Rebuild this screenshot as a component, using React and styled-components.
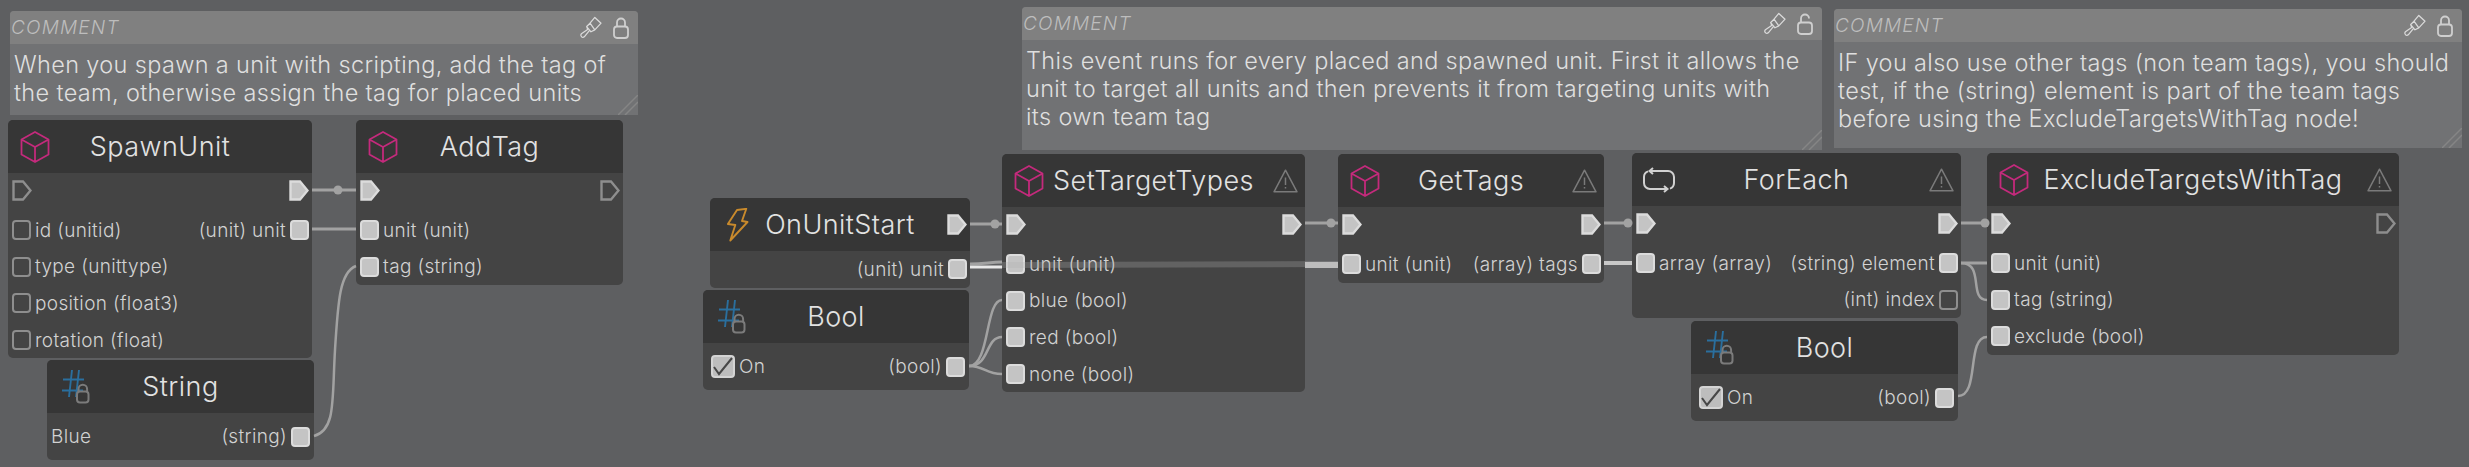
import React from 'react'
import styled, { createGlobalStyle } from 'styled-components'

const Global = createGlobalStyle`
  html, body { margin:0; padding:0; background:#5e5f61; }
  body { font-family:Inter,"Open Sans","Liberation Sans",sans-serif; font-weight:300; }
`
const Canvas = styled.div`
  position:relative;
  width:2469px;
  height:467px;
  overflow:hidden;
  background:#5e5f61;
`
const NodeBox = styled.div`
  position:absolute;
  left:${p => p.$x}px;
  top:${p => p.$y}px;
  width:${p => p.$w}px;
  background:#444444;
  border-radius:5px;
  overflow:hidden;
`
const Head = styled.div`
  display:grid;
  grid-template-columns:minmax(0,1fr) auto minmax(0,1fr);
  align-items:center;
  height:53px;
  background:#363636;
`
const HeadLeft = styled.div`
  display:flex;
  align-items:center;
  padding-left:${p => p.$pad ?? 12}px;
`
const HeadRight = styled.div`
  display:flex;
  align-items:center;
  justify-content:flex-end;
  padding-right:${p => p.$pad}px;
`
const Title = styled.div`
  font-size:27px;
  letter-spacing:0.45px;
  color:#e2e2e2;
  white-space:nowrap;
`
const Body = styled.div`
  padding:0 3px 0 4px;
`
const ExecRow = styled.div`
  display:flex;
  justify-content:space-between;
  align-items:center;
  height:34px;
  margin-bottom:5px;
`
const Row = styled.div`
  display:flex;
  justify-content:space-between;
  align-items:center;
  height:36.6px;
`
const ValueRow = styled.div`
  display:flex;
  justify-content:space-between;
  align-items:center;
  height:47px;
  padding:0 1px 0 ${p => p.$padL ?? 0}px;
`
const Side = styled.div`
  display:flex;
  align-items:center;
  gap:4px;
  margin-left:${p => (p.$right ? 'auto' : 0)};
`
const Label = styled.span`
  font-size:19px;
  letter-spacing:0.35px;
  color:#d2d2d2;
  white-space:nowrap;
`
const Pin = styled.span`
  display:block;
  box-sizing:border-box;
  width:19px;
  height:20px;
  border-radius:4px;
  border:2px solid ${p => (p.$on ? '#dcdcdc' : '#8e8e8e')};
  background:${p => (p.$on ? '#c4c4c4' : 'transparent')};
`
const Check = styled.span`
  display:flex;
  align-items:center;
  justify-content:center;
  box-sizing:border-box;
  width:24px;
  height:23px;
  border-radius:4px;
  border:2px solid #d4d4d4;
  background:#bdbdbd;
`
const CommentBox = styled.div`
  position:absolute;
  left:${p => p.$x}px;
  top:${p => p.$y}px;
  width:${p => p.$w}px;
  height:${p => p.$h}px;
  background:#717274;
  border-radius:4px 4px 0 0;
`
const CommentHead = styled.div`
  display:flex;
  align-items:center;
  justify-content:space-between;
  height:33px;
  padding:0 9px 0 1px;
  background:#808080;
  border-radius:4px 4px 0 0;
`
const CommentTitle = styled.span`
  font-size:19px;
  font-style:italic;
  letter-spacing:1.2px;
  color:#bdbdbd;
`
const CommentTools = styled.div`
  display:flex;
  align-items:center;
  gap:11px;
`
const CommentText = styled.div`
  padding:7px 0 0 4px;
  font-size:23.5px;
  line-height:27.8px;
  letter-spacing:0.35px;
  color:#dfdfdf;
  white-space:pre;
`
const Grip = styled.svg`
  position:absolute;
  right:0;
  bottom:0;
`
const Wires = styled.svg`
  position:absolute;
  left:0;
  top:0;
  pointer-events:none;
`

const ExecPin = ({ on }) => (
  <svg width="20" height="21" viewBox="0 0 20 21">
    <path d="M1.5 1.5H11L18.5 10.5L11 19.5H1.5Z" fill={on ? '#c4c4c4' : 'none'} stroke={on ? '#dcdcdc' : '#8e8e8e'} strokeWidth="2.4" />
  </svg>
)
const CubeIcon = () => (
  <svg width="30" height="32" viewBox="0 0 30 32" fill="none" stroke="#c42a7c" strokeWidth="1.8" strokeLinejoin="round">
    <path d="M15 1L28.5 8.5V23.5L15 31L1.5 23.5V8.5Z M1.5 8.5L15 16L28.5 8.5 M15 16V31" />
  </svg>
)
const HashIcon = () => (
  <svg width="36" height="36" viewBox="0 0 36 36" fill="none">
    <path d="M1 10.5H22 M0 21.5H21 M10 1L7 28 M17 1L14 28" stroke="#2a6f9e" strokeWidth="1.9" />
    <path d="M16.5 22.5V20a4.3 4.3 0 0 1 8.6 0V22.5" stroke="#7b7b7b" strokeWidth="2" />
    <rect x="15" y="22.5" width="11.5" height="11" rx="3" stroke="#7b7b7b" strokeWidth="2" />
  </svg>
)
const BoltIcon = () => (
  <svg width="22" height="34" viewBox="0 0 22 34" fill="none" stroke="#c98a2c" strokeWidth="1.9" strokeLinejoin="round">
    <path d="M10 2L19.3 .8L15 13L20.5 14L3.3 32.5L8.3 17L.9 16Z" />
  </svg>
)
const LoopIcon = () => (
  <svg width="36" height="26" viewBox="0 0 36 26" fill="none" stroke="#d0d0d0" strokeWidth="2">
    <path d="M9 4H27a6 6 0 0 1 6 6v6a6 6 0 0 1-4 5.6 M12 1L8.5 4L12 7 M26 22H9a6 6 0 0 1-6-6v-6a6 6 0 0 1 4-5.6 M23 19L26.5 22L23 25" />
  </svg>
)
const WarnIcon = () => (
  <svg width="25" height="24" viewBox="0 0 25 24" fill="none" stroke="#7a7a7a" strokeWidth="1.5" strokeLinejoin="round">
    <path d="M12.5 1.2L24 22.8H1Z M12.5 8.5V16 M12.5 18V19.6" />
  </svg>
)
const BrushIcon = () => (
  <svg width="23" height="23" viewBox="0 0 24 24" fill="none" stroke="#dadada" strokeWidth="1.3" strokeLinejoin="round">
    <path d="M11.5 7.5L16.5 1.5L23 7.5L16.5 14.5Z M11.5 7.5L8 11L12.5 16.5L16.5 14.5 M8 11L9 14L2.5 18.5a2.2 2.2 0 0 0 3 3.2L11 15" />
  </svg>
)
const LockIcon = ({ open }) => (
  <svg width="16" height="22" viewBox="0 0 16 22" fill="none" stroke="#cfcfcf" strokeWidth="1.8">
    <path d={open ? 'M4 9.5V5.5a4 4 0 0 1 8 0' : 'M4 9.5V5.5a4 4 0 0 1 8 0V9.5'} />
    <rect x="1" y="9.5" width="14" height="11.5" rx="3" />
  </svg>
)
const ICONS = { cube: <CubeIcon />, hash: <HashIcon />, bolt: <BoltIcon />, loop: <LoopIcon /> }

const Comment = ({ x, y, w, h, open, text }) => (
  <CommentBox $x={x} $y={y} $w={w} $h={h}>
    <CommentHead>
      <CommentTitle>COMMENT</CommentTitle>
      <CommentTools><BrushIcon /><LockIcon open={open} /></CommentTools>
    </CommentHead>
    <CommentText>{text}</CommentText>
    <Grip width="20" height="20" viewBox="0 0 20 20" stroke="#858585" strokeWidth="1.5">
      <path d="M0 20L20 0 M7 20L20 7" />
    </Grip>
  </CommentBox>
)

const Node = ({ x, y, w, icon, title, warn, padL, headPin, execIn, execOut, rows, value }) => (
  <NodeBox $x={x} $y={y} $w={w}>
    <Head>
      <HeadLeft $pad={padL}>{ICONS[icon]}</HeadLeft>
      <Title>{title}</Title>
      <HeadRight $pad={headPin ? 3 : 7}>{warn && <WarnIcon />}{headPin && <ExecPin on />}</HeadRight>
    </Head>
    <Body>
      {execIn !== undefined && (
        <ExecRow><ExecPin on={execIn} /><ExecPin on={execOut} /></ExecRow>
      )}
      {rows && rows.map((r, i) => (
        <Row key={i}>
          {r.l && <Side><Pin $on={r.lOn} /><Label>{r.l}</Label></Side>}
          {r.r && <Side $right><Label>{r.r}</Label><Pin $on={r.rOn} /></Side>}
        </Row>
      ))}
      {value}
    </Body>
  </NodeBox>
)

const BoolValue = (
  <ValueRow $padL={4}>
    <Side>
      <Check>
        <svg width="20" height="19" viewBox="0 0 20 19" fill="none" stroke="#474747" strokeWidth="2"><path d="M1 10L6 17L19 1" /></svg>
      </Check>
      <Label>On</Label>
    </Side>
    <Side $right><Label>(bool)</Label><Pin $on /></Side>
  </ValueRow>
)
const StringValue = (
  <ValueRow>
    <Label>Blue</Label>
    <Side $right><Label>(string)</Label><Pin $on /></Side>
  </ValueRow>
)

const WIRES = [
  ['M312 190H356', 3], ['M312 229H356', 3],
  ['M314 436C336 430 332 400 335 350C338 300 340 272 356 266', 2.5],
  ['M970 224H1002', 3], ['M1305 223H1338', 3], ['M1604 223H1632', 3], ['M1961 223H1987', 3],
  ['M970 264C985 264 990 262 1002 262', 3],
  ['M970 267H1002', 3, 1, '#e8e8e8'],
  ['M1002 265L1338 264', 6, 0.28, '#b0b0b0'],
  ['M1305 265H1338', 6, 1, '#bdbdbd'],
  ['M1604 263H1632', 4, 1, '#c8c8c8'],
  ['M969 366C990 366 985 300 1002 300', 2.5],
  ['M969 366C990 366 985 337 1002 337', 2.5],
  ['M969 366C985 366 985 374 1002 374', 2.5],
  ['M1961 263H1987', 3],
  ['M1961 263C1985 263 1968 300 1987 300', 2.5],
  ['M1958 396C1980 396 1966 337 1987 337', 2.5],
]
const DOTS = [[338, 190], [995, 224], [1331, 223], [1628, 223], [1985, 223]]

export default function App() {
  return (
    <Canvas>
      <Global />
      <Comment x={10} y={11} w={628} h={104}
        text={'When you spawn a unit with scripting, add the tag of\nthe team, otherwise assign the tag for placed units'} />
      <Comment x={1022} y={7} w={800} h={143} open
        text={'This event runs for every placed and spawned unit. First it allows the\nunit to target all units and then prevents it from targeting units with\nits own team tag'} />
      <Comment x={1834} y={9} w={628} h={139}
        text={'IF you also use other tags (non team tags), you should\ntest, if the (string) element is part of the team tags\nbefore using the ExcludeTargetsWithTag node!'} />

      <Node x={8} y={120} w={304} icon="cube" title="SpawnUnit" execIn={false} execOut
        rows={[
          { l: 'id (unitid)', r: '(unit) unit', rOn: true },
          { l: 'type (unittype)' },
          { l: 'position (float3)' },
          { l: 'rotation (float)' },
        ]} />
      <Node x={356} y={120} w={267} icon="cube" title="AddTag" execIn execOut={false}
        rows={[{ l: 'unit (unit)', lOn: true }, { l: 'tag (string)', lOn: true }]} />
      <Node x={47} y={360} w={267} icon="hash" padL={15} title="String" value={StringValue} />

      <Node x={710} y={198} w={260} icon="bolt" padL={17} title="OnUnitStart" headPin
        rows={[{ r: '(unit) unit', rOn: true }]} />
      <Node x={703} y={290} w={266} icon="hash" padL={15} title="Bool" value={BoolValue} />
      <Node x={1002} y={154} w={303} icon="cube" title="SetTargetTypes" warn execIn execOut
        rows={[
          { l: 'unit (unit)', lOn: true },
          { l: 'blue (bool)', lOn: true },
          { l: 'red (bool)', lOn: true },
          { l: 'none (bool)', lOn: true },
        ]} />
      <Node x={1338} y={154} w={266} icon="cube" title="GetTags" warn execIn execOut
        rows={[{ l: 'unit (unit)', lOn: true, r: '(array) tags', rOn: true }]} />
      <Node x={1632} y={153} w={329} icon="loop" padL={9} title="ForEach" warn execIn execOut
        rows={[
          { l: 'array (array)', lOn: true, r: '(string) element', rOn: true },
          { r: '(int) index' },
        ]} />
      <Node x={1691} y={321} w={267} icon="hash" padL={15} title="Bool" value={BoolValue} />
      <Node x={1987} y={153} w={412} icon="cube" title="ExcludeTargetsWithTag" warn execIn execOut={false}
        rows={[
          { l: 'unit (unit)', lOn: true },
          { l: 'tag (string)', lOn: true },
          { l: 'exclude (bool)', lOn: true },
        ]} />

      <Wires width="2469" height="467" fill="none">
        {WIRES.map(([d, w, o, c], i) => (
          <path key={i} d={d} stroke={c || '#a2a2a2'} strokeWidth={w} opacity={o || 1} />
        ))}
        {DOTS.map(([cx, cy]) => <circle key={cx} cx={cx} cy={cy} r="4.5" fill="#a2a2a2" />)}
      </Wires>
    </Canvas>
  )
}
